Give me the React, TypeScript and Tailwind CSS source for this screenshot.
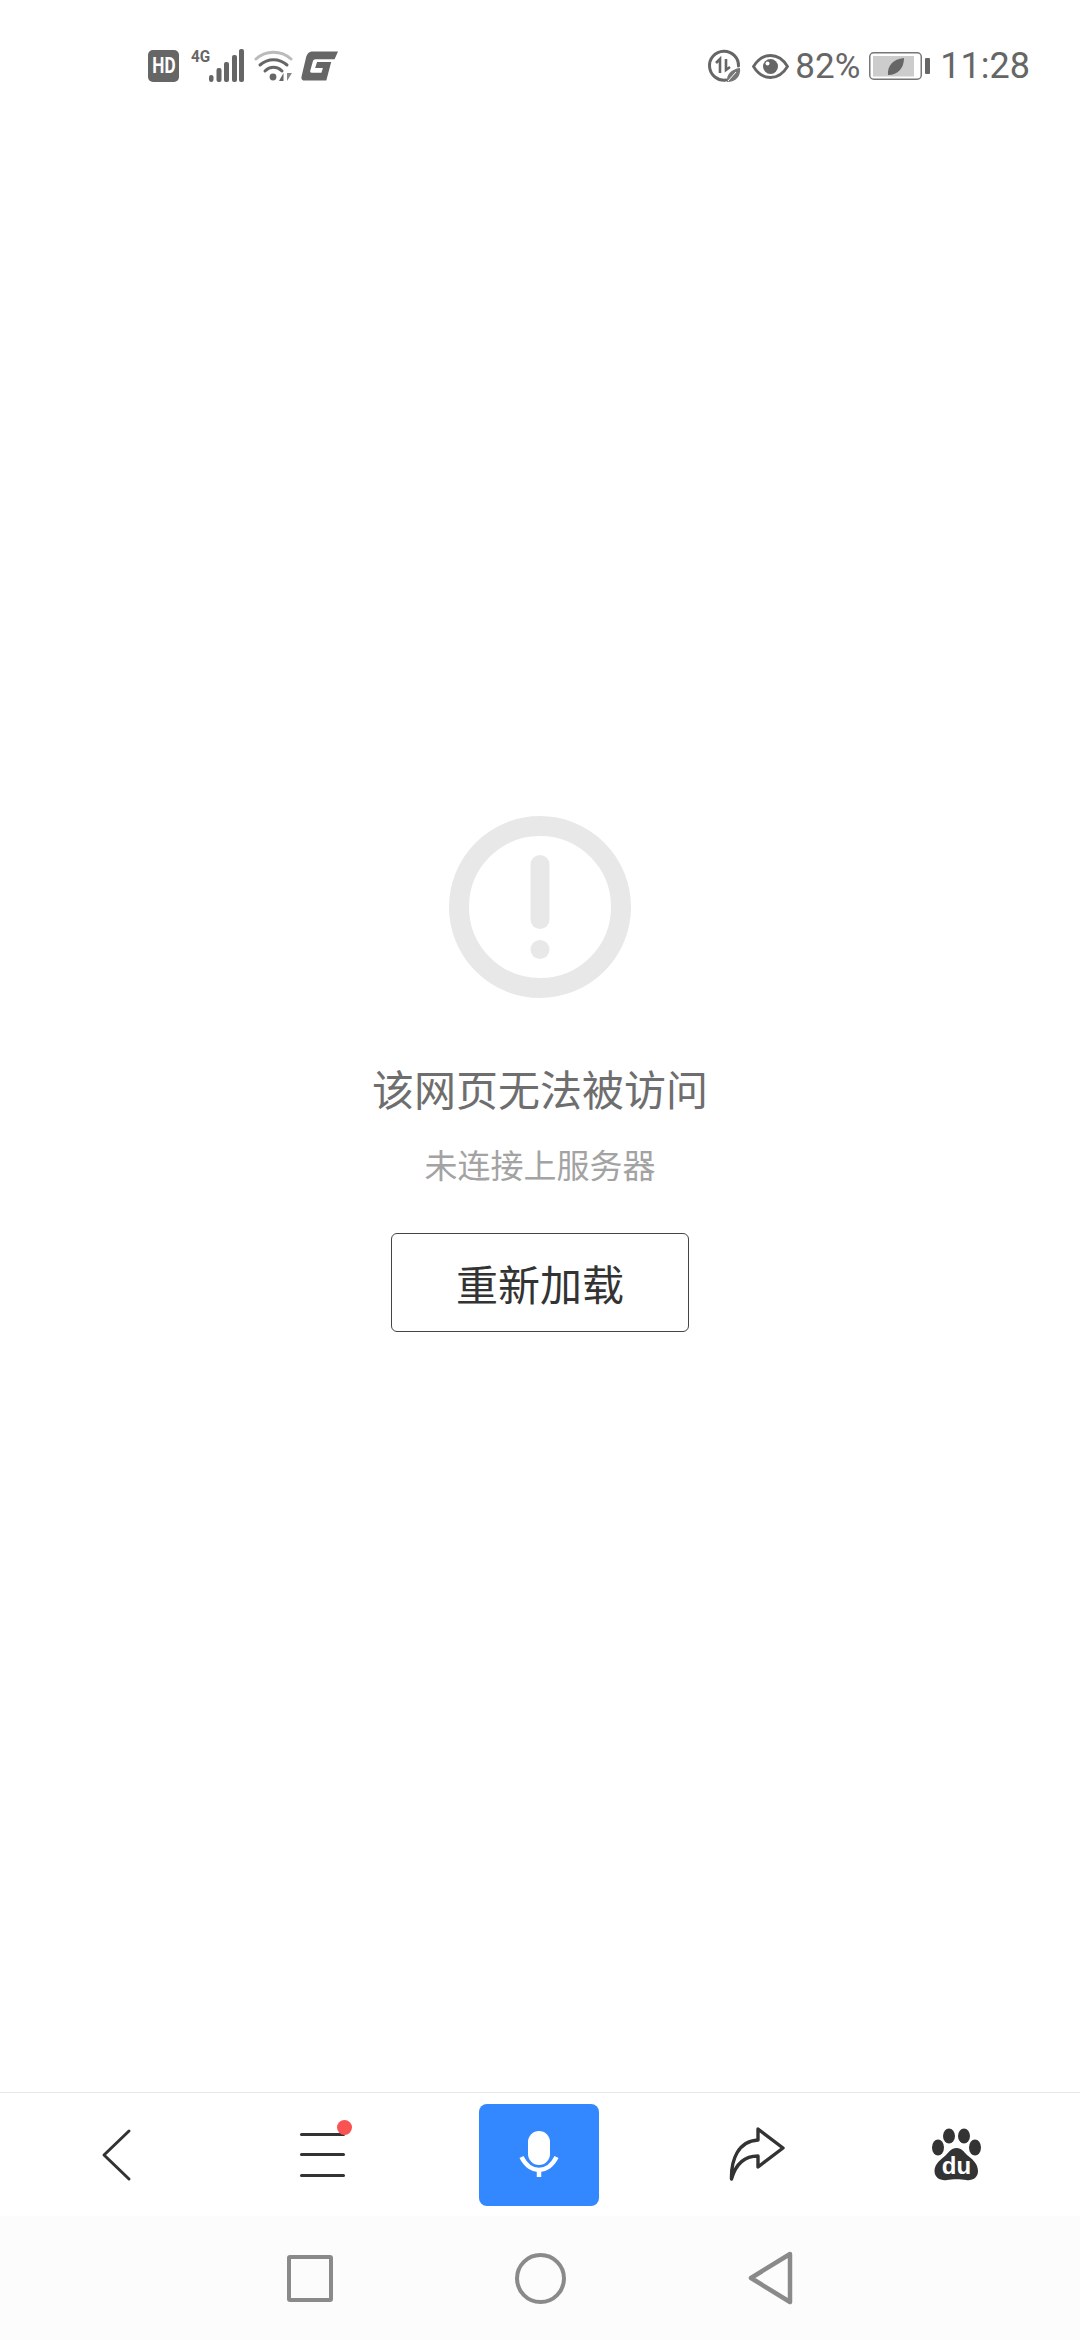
const SANS = "font-['Noto_Sans_CJK_SC','Noto_Sans',sans-serif]";

function LeftStatusIcons() {
  return (
    <div className="flex items-center ml-[148px]">
      {/* HD */}
      <div className="w-[31px] h-[32px] rounded-[5px] bg-[#666666] flex items-center justify-center">
        <span className="text-[22px] leading-[22px] font-bold text-white font-['Roboto',sans-serif] scale-x-[0.78]">HD</span>
      </div>
      {/* 4G + signal */}
      <div className="flex items-start h-[34px] ml-[12px]">
        <span className="w-[18px] text-[17px] leading-[14px] font-bold text-[#666666] font-['Roboto',sans-serif] scale-x-[0.9] origin-left">4G</span>
        <svg width="36" height="34" viewBox="18 0 36 34">
          <g fill="#666666">
            <rect x="18" y="26" width="4.5" height="7" rx="2.2" />
            <rect x="25.5" y="19" width="5" height="14" rx="2" />
            <rect x="33" y="13" width="5" height="20" rx="2" />
            <rect x="41" y="6" width="5" height="27" rx="2" />
            <rect x="48" y="0" width="5" height="33" rx="2" />
          </g>
        </svg>
      </div>
      {/* wifi */}
      <svg width="40" height="34" viewBox="0 0 40 34" className="ml-[9px]" fill="none">
        <path d="M2 10 C12 1 27 1 37 10" stroke="#bbbbbb" strokeWidth="3" strokeLinecap="round" />
        <path d="M6 16 C14 9 25 9 33 16" stroke="#666666" strokeWidth="3" strokeLinecap="round" />
        <path d="M11 22 C16 17 23 17 28 22" stroke="#666666" strokeWidth="3" strokeLinecap="round" />
        <circle cx="19" cy="28" r="3.4" fill="#666666" />
        <path d="M29.5 32 L29.5 24 L25 32 Z" fill="#666666" />
        <path d="M33 24 L33 32 L38 24 Z" fill="#888888" />
      </svg>
      {/* G */}
      <svg width="37" height="30" viewBox="0 0 38 30" className="ml-[7px]">
        <path
          d="M12 0 H38 L34.5 8 H15 C13.5 8 12.6 8.8 12.2 10 L9.5 20 C9.2 21.3 9.8 22 11 22 H21 L22.5 17 H14.5 L16.5 11 H31 L26 30 H4 C1.2 30 0 28.5 0.5 26 L5 7 C6 2.5 8 0 12 0 Z"
          fill="#666666"
        />
      </svg>
    </div>
  );
}

function RightStatusIcons() {
  return (
    <div className="flex items-center mr-[50px] text-[#666666] font-['Roboto',sans-serif]">
      {/* data saver */}
      <svg width="34" height="34" viewBox="0 0 34 34" fill="none">
        <path d="M19 31 A14.5 14.5 0 1 1 31.5 17" stroke="#666666" strokeWidth="3" strokeLinecap="round" />
        <path d="M13 24 V10 L9 14" stroke="#666666" strokeWidth="2.6" />
        <path d="M19 10 V21 L23 18" stroke="#666666" strokeWidth="2.6" />
        <path d="M20 33 C19 26 24 20 33 19 C34 27 29 33 20 33 Z" fill="#777777" />
        <path d="M21 32 L29 23" stroke="#ffffff" strokeWidth="1" />
      </svg>
      {/* eye */}
      <svg width="37" height="25" viewBox="0 0 37 25" className="ml-[11px]" fill="none">
        <path d="M1.5 12.5 C6 5 12 1.5 18.5 1.5 C25 1.5 31 5 35.5 12.5 C31 20 25 23.5 18.5 23.5 C12 23.5 6 20 1.5 12.5 Z" stroke="#666666" strokeWidth="2.8" />
        <circle cx="18.5" cy="12.5" r="7.5" fill="#666666" />
        <circle cx="15.5" cy="9.5" r="2" fill="#ffffff" />
      </svg>
      <span className="ml-[6px] text-[35px] leading-none">82%</span>
      {/* battery */}
      <svg width="62" height="28" viewBox="0 0 62 28" className="ml-[9px]" fill="none">
        <rect x="0.75" y="0.75" width="51.5" height="26.5" rx="4" stroke="#777777" strokeWidth="1.5" />
        <rect x="4" y="4" width="41" height="20.5" fill="#cccccc" />
        <path d="M19 23 C18 14 24 7 35 6 C35 16 29 23 19 23 Z" fill="#666666" />
        <rect x="56" y="6" width="5" height="16" rx="1" fill="#666666" />
      </svg>
      <span className="ml-[9px] text-[36px] leading-none">11:28</span>
    </div>
  );
}

function AlertIcon() {
  return (
    <svg width="182" height="182" viewBox="0 0 182 182" fill="none">
      <circle cx="91" cy="91" r="81" stroke="#e8e8e8" strokeWidth="20" />
      <rect x="81.5" y="39" width="19" height="74" rx="9.5" fill="#e8e8e8" />
      <circle cx="91" cy="133.5" r="9.5" fill="#e8e8e8" />
    </svg>
  );
}

function Toolbar() {
  return (
    <div className="h-[124px] border-t border-[#e8e8e8] bg-white flex items-center shrink-0">
      <svg width="31" height="54" viewBox="0 0 31 54" className="ml-[101px]" fill="none">
        <path d="M28 3 L3 27 L28 51" stroke="#333333" strokeWidth="3" strokeLinecap="round" strokeLinejoin="round" />
      </svg>
      <div className="relative ml-[168px] w-[45px] h-[44px] flex flex-col justify-between">
        <div className="h-[3px] rounded-full bg-[#333333]" />
        <div className="h-[3px] rounded-full bg-[#333333]" />
        <div className="h-[3px] rounded-full bg-[#333333]" />
        <div className="absolute -top-[13px] -right-[7px] w-[15px] h-[15px] rounded-full bg-[#f85252]" />
      </div>
      <div className="ml-[134px] w-[120px] h-[102px] rounded-[8px] bg-[#3388ff] flex items-center justify-center">
        <svg width="40" height="48" viewBox="0 0 40 48" className="mb-[2px]" fill="none">
          <rect x="9" y="1" width="22" height="34" rx="11" fill="#ffffff" />
          <path d="M2.5 27 C7 36 14 40 20 40 C26 40 33 36 37.5 27" stroke="#ffffff" strokeWidth="4.5" />
          <path d="M20 40 V47" stroke="#ffffff" strokeWidth="4.5" />
        </svg>
      </div>
      <svg width="60" height="60" viewBox="0 0 60 60" className="ml-[129px]" fill="none">
        <path
          d="M30 4 L55 23 L30 42 V31 C18 31 8 38 3.5 54 C3 35 10 16 30 15 Z"
          stroke="#333333"
          strokeWidth="3.4"
          strokeLinejoin="round"
        />
      </svg>
      <svg width="52" height="54" viewBox="0 0 52 54" className="ml-[142px]">
        <g fill="#333333">
          <ellipse cx="19" cy="8" rx="6" ry="7.5" />
          <ellipse cx="34" cy="8" rx="6" ry="7.5" />
          <ellipse cx="8" cy="19.5" rx="6" ry="8" />
          <ellipse cx="45" cy="19.5" rx="6" ry="8" />
          <path d="M26.5 20 C32 20 34 24 37 27 C41 30 48 35 48 43 C48 50 42 53 36 52 C31 51 22 51 17 52 C11 53 4.5 50 4.5 43 C4.5 35 12 31 16 27 C19 24 21 20 26.5 20 Z" />
        </g>
        <text x="26.5" y="45.5" textAnchor="middle" fontSize="24" fontWeight="700" fill="#ffffff" fontFamily="Liberation Sans, sans-serif">du</text>
      </svg>
    </div>
  );
}

function NavBar() {
  return (
    <div className="h-[124px] bg-[#fcfcfc] flex items-center justify-center gap-[182px] shrink-0">
      <div className="w-[46px] h-[47px] rounded-[3px] border-[4px] border-[#8a8a8a]" />
      <div className="w-[51px] h-[51px] rounded-full border-[4px] border-[#8a8a8a]" />
      <svg width="46" height="54" viewBox="0 0 46 54" fill="none">
        <path d="M42 3 L3 27 L42 51 Z" stroke="#8a8a8a" strokeWidth="4.5" strokeLinejoin="round" />
      </svg>
    </div>
  );
}

export default function App() {
  return (
    <div className={`w-[1080px] h-[2340px] bg-white flex flex-col overflow-hidden ${SANS}`}>
      <div className="h-[132px] flex items-center justify-between shrink-0">
        <LeftStatusIcons />
        <RightStatusIcons />
      </div>

      <main className="flex-1 flex flex-col items-center pt-[684px]">
        <AlertIcon />
        <h1 className="mt-[62px] text-[42px] leading-[56px] font-normal text-[#6e6e6e]">该网页无法被访问</h1>
        <p className="mt-[26px] text-[33px] leading-[44px] text-[#a3a3a3]">未连接上服务器</p>
        <button className="mt-[47px] w-[298px] h-[99px] rounded-[6px] border-[1.5px] border-[#444444] text-[42px] text-[#333333] flex items-center justify-center">
          重新加载
        </button>
      </main>

      <Toolbar />
      <NavBar />
    </div>
  );
}
